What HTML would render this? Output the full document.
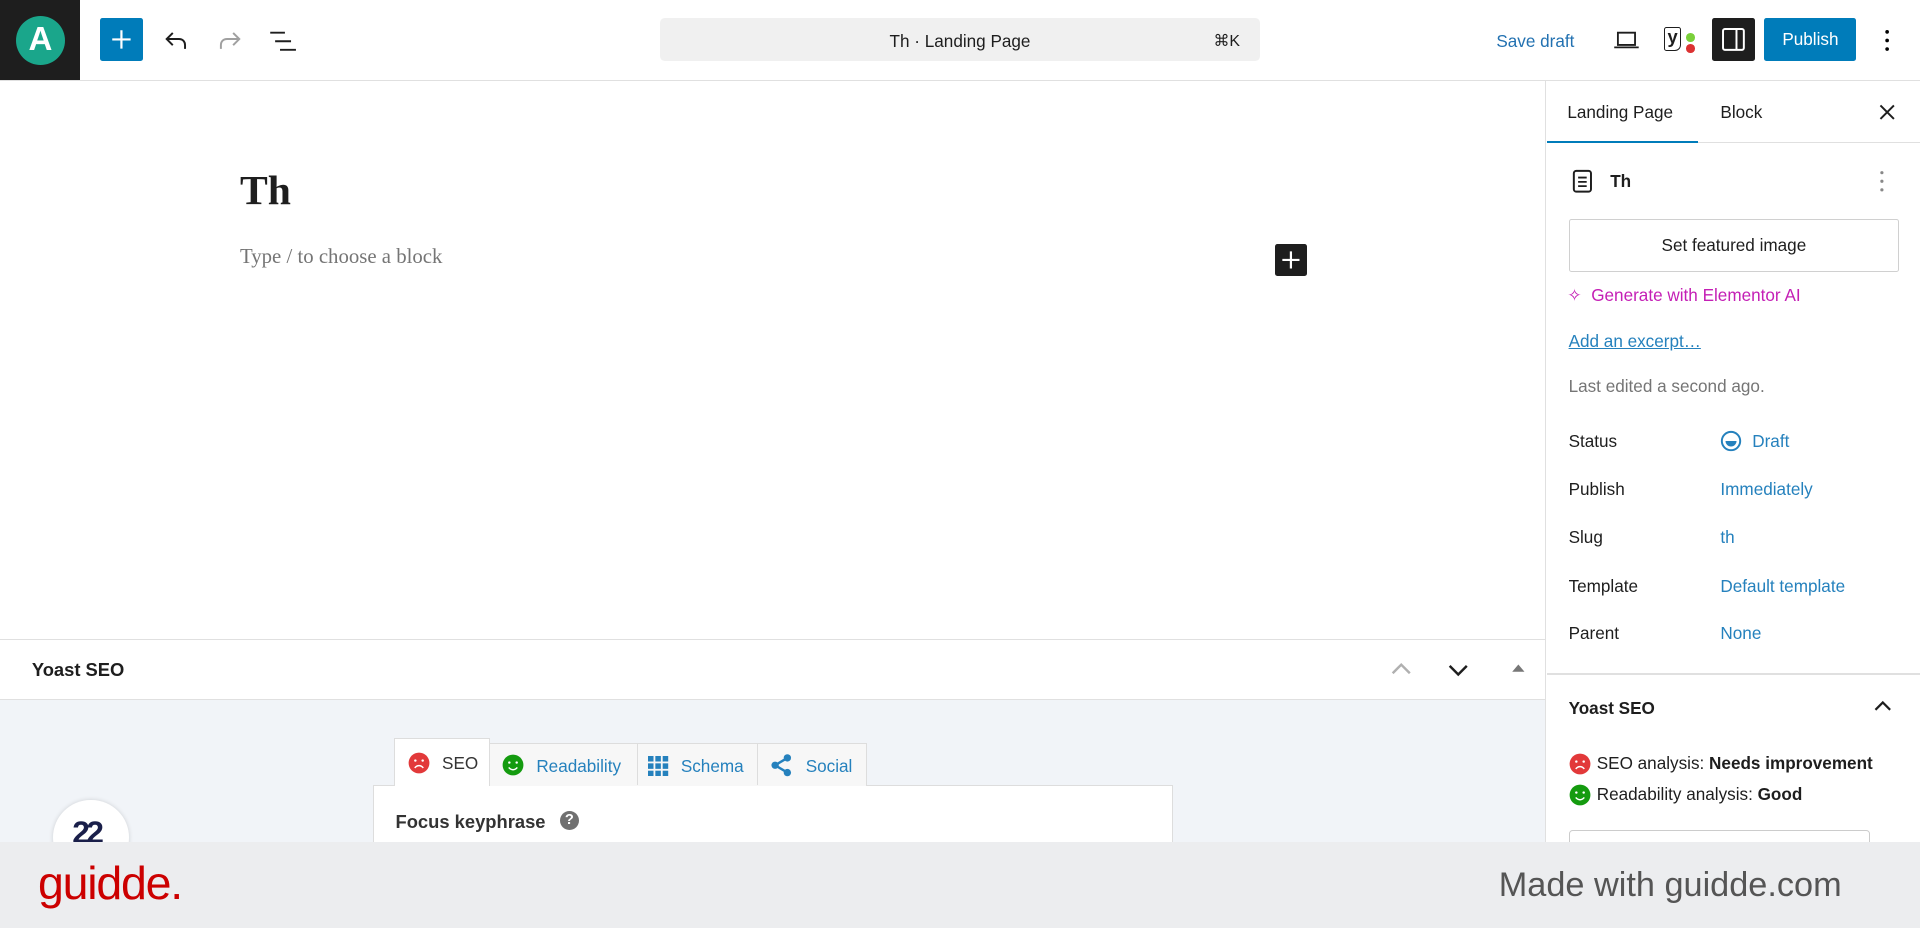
<!DOCTYPE html>
<html><head><meta charset="utf-8"><style>
*{box-sizing:border-box;margin:0;padding:0}
html,body{width:1920px;height:928px;overflow:hidden;background:#fff}
#w{position:relative;width:1568px;height:758px;zoom:1.2244898;font-family:"Liberation Sans",sans-serif;color:#1e1e1e;font-size:14px}
.a{position:absolute;white-space:nowrap}
.lbl{left:1281px;font-size:14px;color:#1e1e1e}
.val{left:1405px;font-size:14px;color:#2581bd}
</style></head><body><div id="w">
<div class="a" style="left:0;top:0;width:1568px;height:66px;border-bottom:1px solid #e0e0e0"></div>
<div class="a" style="left:0;top:0;width:65px;height:65px;background:#1e1e1e"></div>
<div class="a" style="left:13px;top:13px;width:40px;height:40px;border-radius:50%;background:#1aa68b;color:#fff;font-weight:bold;font-size:27px;text-align:center;line-height:40px">A</div>
<div class="a" style="left:82px;top:15px;width:35px;height:35px;background:#007cba;border-radius:2px"></div>
<svg class="a" style="left:82px;top:15px" width="35" height="35"><path d="M17.5 10v15M10 17.5h15" stroke="#fff" stroke-width="1.8"/></svg>
<svg class="a" style="left:133px;top:23px" width="22" height="20"><path d="M8 4L3 9l5 5M3 9h10c3 0 5 2 5 5v3" stroke="#1e1e1e" stroke-width="1.6" fill="none"/></svg>
<svg class="a" style="left:176px;top:23px" width="22" height="20"><path d="M14 4l5 5-5 5M19 9H9c-3 0-5 2-5 5v3" stroke="#a0a0a0" stroke-width="1.6" fill="none"/></svg>
<svg class="a" style="left:220px;top:24px" width="24" height="20"><path d="M1 3h12M5 10h13M9 17h13" stroke="#1e1e1e" stroke-width="1.6"/></svg>
<div class="a" style="left:539px;top:15px;width:490px;height:35px;background:#f0f0f0;border-radius:4px"></div>
<div class="a" style="left:539px;top:25px;width:490px;text-align:center;font-size:14px">Th · Landing Page</div>
<div class="a" style="left:991px;top:25px;font-size:13px">⌘K</div>
<div class="a" style="left:1222px;top:25px;font-size:14px;color:#2271b1">Save draft</div>
<svg class="a" style="left:1317px;top:24px" width="22" height="18"><path d="M4 3h14v10H4zM1 15h20" stroke="#1e1e1e" stroke-width="1.5" fill="none"/></svg>
<div class="a" style="left:1359px;top:22px;width:14px;height:20px;border:1.5px solid #1e1e1e;border-radius:2px 2px 5px 2px;font-weight:bold;font-size:15px;line-height:15px;text-align:center">y</div>
<div class="a" style="left:1377px;top:27px;width:7px;height:7px;border-radius:50%;background:#7ad03a"></div>
<div class="a" style="left:1377px;top:36px;width:7px;height:7px;border-radius:50%;background:#dc3232"></div>
<div class="a" style="left:1398px;top:15px;width:35px;height:35px;background:#1e1e1e;border-radius:2px"></div>
<svg class="a" style="left:1398px;top:15px" width="35" height="35"><rect x="9" y="9" width="17" height="17" rx="1.5" stroke="#fff" stroke-width="1.6" fill="none"/><path d="M20 9v17" stroke="#fff" stroke-width="1.6"/></svg>
<div class="a" style="left:1441px;top:15px;width:75px;height:35px;background:#007cba;border-radius:2px;color:#fff;text-align:center;line-height:35px;font-size:14px">Publish</div>
<svg class="a" style="left:1536px;top:22px" width="10" height="22"><circle cx="5" cy="4" r="1.5"/><circle cx="5" cy="11" r="1.5"/><circle cx="5" cy="18" r="1.5"/></svg>
<div class="a" style="left:196px;top:136px;font-family:'Liberation Serif',serif;font-weight:bold;font-size:34px">Th</div>
<div class="a" style="left:196px;top:199px;font-family:'Liberation Serif',serif;font-size:17px;color:#757575">Type / to choose a block</div>
<div class="a" style="left:1041px;top:199px;width:26px;height:26px;background:#1e1e1e;border-radius:2px"></div>
<svg class="a" style="left:1041px;top:199px" width="26" height="26"><path d="M13 6v14M6 13h14" stroke="#fff" stroke-width="1.8"/></svg>
<div class="a" style="left:0;top:522px;width:1263px;height:50px;border-top:1px solid #e0e0e0;border-bottom:1px solid #e0e0e0;background:#fff"></div>
<div class="a" style="left:26px;top:538px;font-weight:bold;font-size:15px;color:#1e1e1e">Yoast SEO</div>
<svg class="a" style="left:1134px;top:540px" width="20" height="14"><path d="M3 10l7-7 7 7" stroke="#b0b0b0" stroke-width="2" fill="none"/></svg>
<svg class="a" style="left:1181px;top:540px" width="20" height="14"><path d="M3 4l7 7 7-7" stroke="#1e1e1e" stroke-width="2" fill="none"/></svg>
<svg class="a" style="left:1234px;top:541px" width="12" height="10"><path d="M1 8l5-6 5 6z" fill="#777"/></svg>
<div class="a" style="left:0;top:572px;width:1263px;height:120px;background:#f1f4f8"></div>
<div class="a" style="left:305px;top:641px;width:653px;height:60px;background:#fff;border:1px solid #ddd"></div>
<div class="a" style="left:399px;top:607px;width:309px;height:35px;background:#f7f7f7;border:1px solid #ddd;border-bottom:none"></div>
<div class="a" style="left:520px;top:607px;width:1px;height:34px;background:#ddd"></div>
<div class="a" style="left:618px;top:607px;width:1px;height:34px;background:#ddd"></div>
<div class="a" style="left:322px;top:603px;width:78px;height:39px;background:#fff;border:1px solid #ddd;border-bottom:none"></div>
<svg class="a" style="left:333px;top:614px" width="18" height="18"><circle cx="9" cy="9" r="8.5" fill="#e2393a"/><circle cx="6" cy="7" r="1" fill="#fff"/><circle cx="12" cy="7" r="1" fill="#fff"/><path d="M5.5 13c2-2.5 5-2.5 7 0" stroke="#fff" stroke-width="1.2" fill="none"/></svg>
<div class="a" style="left:361px;top:615px;font-size:14px;color:#333">SEO</div>
<svg class="a" style="left:410px;top:616px" width="18" height="18"><circle cx="9" cy="9" r="8.5" fill="#149b0f"/><circle cx="6" cy="7" r="1" fill="#fff"/><circle cx="12" cy="7" r="1" fill="#fff"/><path d="M5.5 11c2 2.5 5 2.5 7 0" stroke="#fff" stroke-width="1.2" fill="none"/></svg>
<div class="a" style="left:438px;top:617px;font-size:14px;color:#2581bd">Readability</div>
<svg class="a" style="left:529px;top:617px" width="17" height="17" fill="#2581bd"><rect x="0" y="0" width="4.5" height="4.5"/><rect x="6" y="0" width="4.5" height="4.5"/><rect x="12" y="0" width="4.5" height="4.5"/><rect x="0" y="6" width="4.5" height="4.5"/><rect x="6" y="6" width="4.5" height="4.5"/><rect x="12" y="6" width="4.5" height="4.5"/><rect x="0" y="12" width="4.5" height="4.5"/><rect x="6" y="12" width="4.5" height="4.5"/><rect x="12" y="12" width="4.5" height="4.5"/></svg>
<div class="a" style="left:556px;top:617px;font-size:14px;color:#2581bd">Schema</div>
<svg class="a" style="left:628px;top:615px" width="20" height="20"><path d="M15 4L5 10l10 6" stroke="#2581bd" stroke-width="2" fill="none"/><circle cx="15" cy="4" r="3" fill="#2581bd"/><circle cx="5" cy="10" r="3" fill="#2581bd"/><circle cx="15" cy="16" r="3" fill="#2581bd"/></svg>
<div class="a" style="left:658px;top:617px;font-size:14px;color:#2581bd">Social</div>
<div class="a" style="left:323px;top:662px;font-weight:bold;font-size:15px;color:#333">Focus keyphrase</div>
<div class="a" style="left:457px;top:662px;width:16px;height:16px;border-radius:50%;background:#707070;color:#fff;font-size:12px;font-weight:bold;text-align:center;line-height:16px">?</div>
<div class="a" style="left:43px;top:653px;width:62px;height:62px;border-radius:50%;background:#fff;box-shadow:0 0 4px rgba(0,0,0,.15)"></div>
<div class="a" style="left:59px;top:665px;font-weight:bold;font-size:26px;color:#1a1f4a;letter-spacing:-3px">22</div>
<div class="a" style="left:1262px;top:66px;width:306px;height:640px;background:#fff;border-left:1px solid #e0e0e0"></div>
<div class="a" style="left:1263px;top:116px;width:305px;height:1px;background:#e0e0e0"></div>
<div class="a" style="left:1263px;top:115px;width:124px;height:2px;background:#007cba"></div>
<div class="a" style="left:1280px;top:83px;font-size:14px">Landing Page</div>
<div class="a" style="left:1405px;top:83px;font-size:14px">Block</div>
<svg class="a" style="left:1534px;top:84px" width="15" height="15"><path d="M2 2l11 11M13 2L2 13" stroke="#1e1e1e" stroke-width="1.6"/></svg>
<svg class="a" style="left:1284px;top:138px" width="18" height="20"><rect x="1.5" y="1.5" width="14" height="17" rx="2" stroke="#1e1e1e" stroke-width="1.6" fill="none"/><path d="M5 7h7M5 10.5h7M5 14h7" stroke="#1e1e1e" stroke-width="1.5"/></svg>
<div class="a" style="left:1315px;top:140px;font-size:14px;font-weight:bold;color:#1e1e1e">Th</div>
<svg class="a" style="left:1533px;top:138px" width="8" height="20" fill="#888"><circle cx="4" cy="3" r="1.3"/><circle cx="4" cy="10" r="1.3"/><circle cx="4" cy="17" r="1.3"/></svg>
<div class="a" style="left:1281px;top:179px;width:270px;height:43px;border:1px solid #d0d0d0;border-radius:2px;text-align:center;line-height:41px;font-size:14px">Set featured image</div>
<div class="a" style="left:1280px;top:233px;font-size:14px;color:#c41fb5">✧&nbsp; Generate with Elementor AI</div>
<div class="a" style="left:1281px;top:270px;font-size:14px;color:#2581bd;text-decoration:underline">Add an excerpt…</div>
<div class="a" style="left:1281px;top:307px;font-size:14px;color:#757575">Last edited a second ago.</div>
<div class="a lbl" style="top:352px">Status</div>
<svg class="a" style="left:1405px;top:351px" width="18" height="18"><circle cx="9" cy="9" r="7.5" stroke="#2581bd" stroke-width="1.6" fill="none"/><path d="M4.5 9h9a4.5 4.5 0 0 1-9 0z" fill="#2581bd"/></svg>
<div class="a val" style="left:1431px;top:352px">Draft</div>
<div class="a lbl" style="top:391px">Publish</div><div class="a val" style="top:391px">Immediately</div>
<div class="a lbl" style="top:430px">Slug</div><div class="a val" style="top:430px">th</div>
<div class="a lbl" style="top:470px">Template</div><div class="a val" style="top:470px">Default template</div>
<div class="a lbl" style="top:509px">Parent</div><div class="a val" style="top:509px">None</div>
<div class="a" style="left:1263px;top:550px;width:305px;height:1px;background:#e0e0e0"></div>
<div class="a" style="left:1281px;top:570px;font-size:14px;font-weight:bold;color:#1e1e1e">Yoast SEO</div>
<svg class="a" style="left:1530px;top:572px" width="16" height="10"><path d="M2 8l6-6 6 6" stroke="#1e1e1e" stroke-width="1.8" fill="none"/></svg>
<svg class="a" style="left:1281px;top:615px" width="18" height="18"><circle cx="9" cy="9" r="8.5" fill="#e2393a"/><circle cx="6" cy="7" r="1" fill="#fff"/><circle cx="12" cy="7" r="1" fill="#fff"/><path d="M5.5 13c2-2.5 5-2.5 7 0" stroke="#fff" stroke-width="1.2" fill="none"/></svg>
<div class="a" style="left:1304px;top:615px;font-size:14px">SEO analysis: <b>Needs improvement</b></div>
<svg class="a" style="left:1281px;top:640px" width="18" height="18"><circle cx="9" cy="9" r="8.5" fill="#149b0f"/><circle cx="6" cy="7" r="1" fill="#fff"/><circle cx="12" cy="7" r="1" fill="#fff"/><path d="M5.5 11c2 2.5 5 2.5 7 0" stroke="#fff" stroke-width="1.2" fill="none"/></svg>
<div class="a" style="left:1304px;top:640px;font-size:14px">Readability analysis: <b>Good</b></div>
<div class="a" style="left:1281px;top:678px;width:246px;height:30px;border:1px solid #ccc;border-radius:3px"></div>
<div class="a" style="left:0;top:688px;width:1568px;height:70px;background:#ecedef"></div>
<div class="a" style="left:31px;top:699px;font-size:38px;color:#cc0000;letter-spacing:-1px">guidde.</div>
<div class="a" style="left:1216px;top:707px;width:288px;text-align:right;font-size:28px;color:#555">Made with guidde.com</div>
</div></body></html>
